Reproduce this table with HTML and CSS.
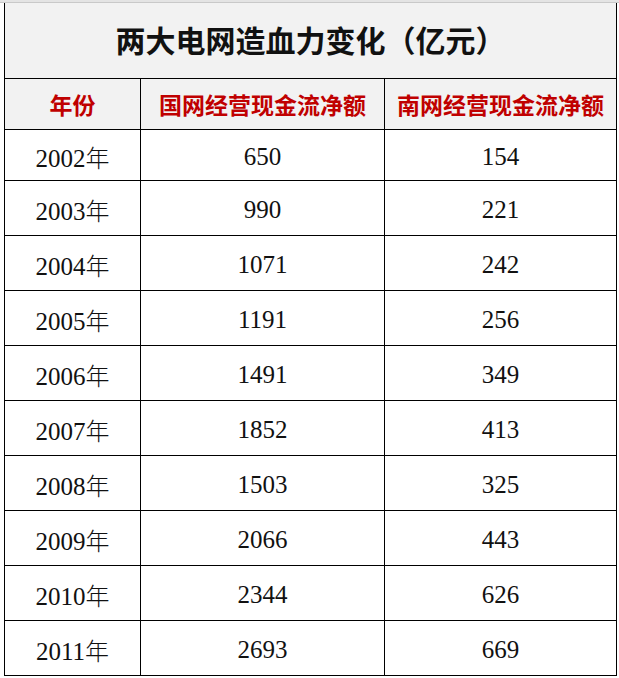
FILE: index.html
```html
<!DOCTYPE html>
<html lang="zh-CN">
<head>
<meta charset="utf-8">
<title>两大电网造血力变化（亿元）</title>
<link rel="stylesheet" href="styles.css">
</head>
<body>
<div class="sheet">
  <div class="topstrip"></div>
  <table class="grid">
    <colgroup>
      <col class="c1"><col class="c2"><col class="c3">
    </colgroup>
    <tr class="title-row"><td colspan="3" class="title">两大电网造血力变化（亿元）</td></tr>
    <tr class="head-row">
      <td class="head">年份</td>
      <td class="head">国网经营现金流净额</td>
      <td class="head">南网经营现金流净额</td>
    </tr>
    <tr class="row first"><td>2002<span class="yr">年</span></td><td>650</td><td>154</td></tr>
    <tr class="row"><td>2003<span class="yr">年</span></td><td>990</td><td>221</td></tr>
    <tr class="row"><td>2004<span class="yr">年</span></td><td>1071</td><td>242</td></tr>
    <tr class="row"><td>2005<span class="yr">年</span></td><td>1191</td><td>256</td></tr>
    <tr class="row"><td>2006<span class="yr">年</span></td><td>1491</td><td>349</td></tr>
    <tr class="row"><td>2007<span class="yr">年</span></td><td>1852</td><td>413</td></tr>
    <tr class="row"><td>2008<span class="yr">年</span></td><td>1503</td><td>325</td></tr>
    <tr class="row"><td>2009<span class="yr">年</span></td><td>2066</td><td>443</td></tr>
    <tr class="row"><td>2010<span class="yr">年</span></td><td>2344</td><td>626</td></tr>
    <tr class="row"><td>2011<span class="yr">年</span></td><td>2693</td><td>669</td></tr>
  </table>
</div>
</body>
</html>
```
FILE: styles.css
```css
html, body {
  margin: 0;
  padding: 0;
  background: #ffffff;
}
.sheet {
  width: 619px;
  height: 678px;
  overflow: hidden;
  position: relative;
}
.topstrip {
  height: 2px;
  background: #e4e4e4;
  border-bottom: 1px solid #c9c9c9;
}
.grid {
  margin-left: 4px;
  width: 612px;
  border-collapse: collapse;
  table-layout: fixed;
}
.c1 { width: 136px; }
.c2 { width: 244px; }
.c3 { width: 232px; }
.grid td {
  border: 1px solid #000;
  padding: 0;
  text-align: center;
  vertical-align: middle;
}
.title-row { height: 75px; }
.title {
  border-top: none !important;
  background: #f2f2f2;
  font-family: "Noto Sans CJK SC", "Noto Sans", sans-serif;
  font-weight: 700;
  font-size: 30px;
  color: #111;
  padding-bottom: 2px !important;
}
.head-row { height: 51px; }
.head {
  background: #f2f2f2;
  font-family: "Noto Sans CJK SC", "Noto Sans", sans-serif;
  font-weight: 700;
  font-size: 23px;
  color: #c00000;
}
.row { height: 55px; }
.row.first { height: 51px; }
.row td {
  font-family: "Liberation Serif", "Noto Sans CJK SC", serif;
  font-size: 25px;
  color: #111;
  padding-top: 4px;
}
.yr {
  font-family: "Noto Sans CJK SC", sans-serif;
  font-weight: 300;
  font-size: 24px;
}
```
